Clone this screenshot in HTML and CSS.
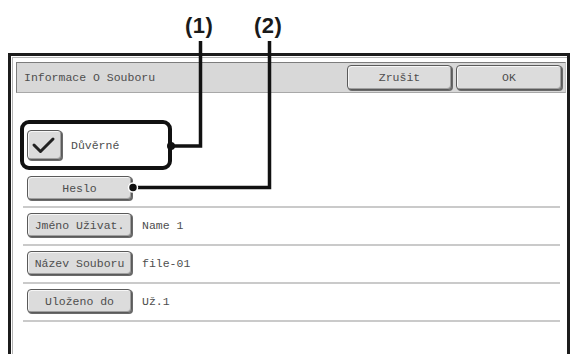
FILE: index.html
```html
<!DOCTYPE html>
<html lang="cs">

<head>
    <meta charset="UTF-8">
    <meta name="viewport" content="width=device-width, initial-scale=1.0">
    <title>Informace O Souboru</title>
    <link rel="stylesheet" href="styles.css">
</head>

<body>
    <div class="page">
        <!-- panel -->
        <div class="frame">
            <div class="frame-inner">
                <div class="titlebar">
                    <span class="title">Informace O Souboru</span>
                    <button class="btn btn-cancel">Zrušit</button>
                    <button class="btn btn-ok">OK</button>
                </div>

                <div class="rows">
                    <div class="row row-check">
                        <button class="checkbox">
                            <svg width="35" height="30" viewBox="0 0 35 30">
                                <path d="M7 15 L13.5 21.5 L26 9" fill="none" stroke="#222" stroke-width="3" stroke-linecap="round" stroke-linejoin="round" />
                            </svg>
                        </button>
                        <span class="label">Důvěrné</span>
                    </div>
                    <div class="row row-pass">
                        <button class="btn btn-field">Heslo</button>
                    </div>
                    <div class="row">
                        <button class="btn btn-field">Jméno Uživat.</button>
                        <span class="value">Name 1</span>
                    </div>
                    <div class="row">
                        <button class="btn btn-field">Název Souboru</button>
                        <span class="value">file-01</span>
                    </div>
                    <div class="row">
                        <button class="btn btn-field">Uloženo do</button>
                        <span class="value">Už.1</span>
                    </div>
                </div>
            </div>
        </div>

        <!-- callouts -->
        <span class="callout-num num-1">(1)</span>
        <span class="callout-num num-2">(2)</span>
        <svg class="callout-lines" width="570" height="354" viewBox="0 0 570 354">
            <rect x="22" y="122" width="148" height="46" rx="7" fill="none" stroke="#111" stroke-width="4" />
            <path d="M200.5 41 V146 H171" fill="none" stroke="#111" stroke-width="3.5" />
            <circle cx="171" cy="146" r="4" fill="#111" />
            <path d="M269.5 41 V187.5 H133" fill="none" stroke="#111" stroke-width="3.5" />
            <circle cx="133" cy="187.5" r="4.5" fill="#111" stroke="#fff" stroke-width="1.5" />
        </svg>
    </div>
</body>

</html>
```

FILE: styles.css
```css
body {
    margin: 0;
    background: #fff;
}

.page {
    position: relative;
    width: 570px;
    height: 354px;
    overflow: hidden;
    font-family: "Liberation Mono", "DejaVu Sans Mono", monospace;
    font-size: 11.5px;
    color: #4e4e4e;
}

/* outer frame, open at the bottom */
.frame {
    box-sizing: border-box;
    margin: 53px 0 0 8px;
    width: 562px;
    height: 301px;
    border: 3px solid #1c1c1c;
    border-bottom: none;
}

.frame-inner {
    box-sizing: border-box;
    height: 100%;
    margin: 1px 0 0 1px;
    border-top: 1px solid #b4b4b4;
    border-left: 1px solid #b4b4b4;
}

/* title bar */
.titlebar {
    box-sizing: border-box;
    display: flex;
    align-items: center;
    gap: 4px;
    height: 31px;
    margin: 4px 1px 0 3px;
    padding: 0 3px 0 7px;
    background: #d8d8d8;
    border-top: 1px solid #7c7c7c;
    border-left: 1px solid #7c7c7c;
    border-bottom: 1px solid #a8a8a8;
    border-right: 1px solid #c4c4c4;
}

.title {
    margin-right: auto;
}

/* buttons */
.btn {
    box-sizing: border-box;
    height: 24px;
    padding: 0;
    font: inherit;
    color: inherit;
    background: #dcdcdc;
    border: 1px solid #5a5a5a;
    border-radius: 4px;
    box-shadow: inset 1px 1px 0 #f6f6f6, inset -1px -1px 0 #a0a0a0, 1px 1px 0 #6a6a6a;
}

.btn-cancel {
    width: 105px;
    height: 25px;
}

.btn-ok {
    width: 106px;
    height: 25px;
}

.btn-field {
    width: 105px;
    flex: none;
}

/* rows */
.rows {
    margin: 0 7px 0 10px;
}

.row {
    display: flex;
    align-items: center;
    gap: 10px;
    padding: 5px 0 7px 4px;
    border-bottom: 2px solid #cacaca;
}

.row-check {
    margin-top: 37px;
    padding: 0 0 0 4px;
    gap: 9px;
    border-bottom: none;
}

.row-pass {
    margin-top: 16px;
    padding: 0 0 6px 4px;
}

.checkbox {
    box-sizing: border-box;
    width: 35px;
    height: 30px;
    padding: 0;
    background: #dcdcdc;
    border: 1px solid #5a5a5a;
    border-radius: 4px;
    box-shadow: inset 1px 1px 0 #f6f6f6, inset -1px -1px 0 #a0a0a0, 1px 1px 0 #6a6a6a;
}

.checkbox svg {
    display: block;
    margin: -1px;
}

/* callouts over the panel */
.callout-num {
    position: absolute;
    top: 13px;
    font-family: "Liberation Sans", Arial, sans-serif;
    font-weight: bold;
    font-size: 22px;
    letter-spacing: 0.5px;
    color: #1a1a1a;
}

.num-1 {
    left: 185px;
}

.num-2 {
    left: 254px;
}

.callout-lines {
    position: absolute;
    top: 0;
    left: 0;
}
```
